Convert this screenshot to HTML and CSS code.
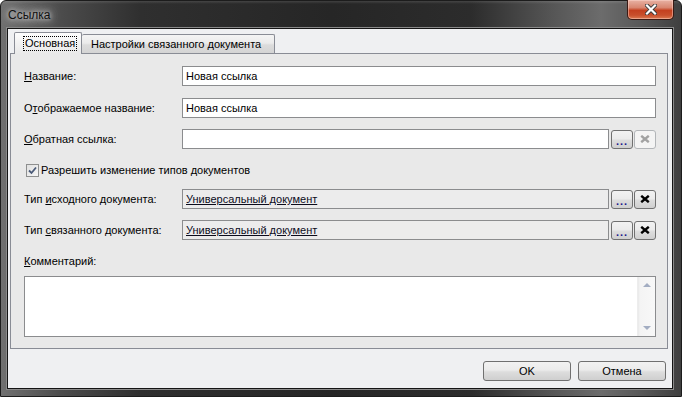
FILE: index.html
```html
<!DOCTYPE html>
<html lang="ru">
<head>
    <meta charset="UTF-8">
    <title>Ссылка</title>
    <link rel="stylesheet" href="styles.css">
</head>
<body>
    <div class="window">
        <div class="titlebar">
            <span class="title">Ссылка</span>
            <div class="close-btn">
                <svg width="12" height="11" viewBox="0 0 12 11">
                    <path d="M2 1.5 L10 9.5 M10 1.5 L2 9.5" stroke="#3a3a3a" stroke-width="4" stroke-linecap="square"/>
                    <path d="M2 1.5 L10 9.5 M10 1.5 L2 9.5" stroke="#ffffff" stroke-width="2.2" stroke-linecap="square"/>
                </svg>
            </div>
        </div>
        <div class="client">
            <div class="tabs">
                <div class="tab active"><span class="focus">Основная</span></div>
                <div class="tab">Настройки связанного документа</div>
            </div>
            <div class="panel">
                <div class="row">
                    <div class="label"><u>Н</u>азвание:</div>
                    <div class="field">Новая ссылка</div>
                </div>
                <div class="row gap12">
                    <div class="label">О<u>т</u>ображаемое название:</div>
                    <div class="field">Новая ссылка</div>
                </div>
                <div class="row gap11">
                    <div class="label"><u>О</u>братная ссылка:</div>
                    <div class="field"></div>
                    <div class="btn-small dots">...</div>
                    <div class="btn-small disabled">
                        <svg width="10" height="8" viewBox="0 0 10 8"><path d="M1.2 0.8 L8.8 7.2 M8.8 0.8 L1.2 7.2" stroke="#a2a2a2" stroke-width="2.4"/></svg>
                    </div>
                </div>
                <div class="row gap11 check-row">
                    <div class="checkbox">
                        <svg width="9" height="9" viewBox="0 0 9 9"><path d="M1 4.5 L3.5 7 L8 1.5" fill="none" stroke="#4a5a78" stroke-width="1.8"/></svg>
                    </div>
                    <span>Разрешить изменение типов документов</span>
                </div>
                <div class="row gap9">
                    <div class="label">Тип <u>и</u>сходного документа:</div>
                    <div class="field readonly"><span class="link">Универсальный документ</span></div>
                    <div class="btn-small dots">...</div>
                    <div class="btn-small">
                        <svg width="10" height="8" viewBox="0 0 10 8"><path d="M1.2 0.8 L8.8 7.2 M8.8 0.8 L1.2 7.2" stroke="#000" stroke-width="2.4"/></svg>
                    </div>
                </div>
                <div class="row gap11">
                    <div class="label">Тип <u>с</u>вязанного документа:</div>
                    <div class="field readonly"><span class="link">Универсальный документ</span></div>
                    <div class="btn-small dots">...</div>
                    <div class="btn-small">
                        <svg width="10" height="8" viewBox="0 0 10 8"><path d="M1.2 0.8 L8.8 7.2 M8.8 0.8 L1.2 7.2" stroke="#000" stroke-width="2.4"/></svg>
                    </div>
                </div>
                <div class="row gap11">
                    <div class="label"><u>К</u>омментарий:</div>
                </div>
                <div class="memo">
                    <div class="memo-text"></div>
                    <div class="scrollbar">
                        <div class="arrow up"></div>
                        <div class="arrow down"></div>
                    </div>
                </div>
            </div>
            <div class="footer">
                <div class="btn">OK</div>
                <div class="btn">Отмена</div>
            </div>
        </div>
    </div>
</body>
</html>
```

FILE: styles.css
```css
body {
    margin: 0;
    width: 682px;
    height: 397px;
    overflow: hidden;
    font-family: 'Liberation Sans', Arial, sans-serif;
    font-size: 11px;
    color: #000;
    background: #fff;
}
.window {
    width: 682px;
    height: 397px;
    display: flex;
    flex-direction: column;
    box-sizing: border-box;
    border-radius: 6px 6px 0 0;
    border: 1px solid #1c1c1c;
    background:
        linear-gradient(180deg, rgba(255,255,255,0.12) 0, rgba(0,0,0,0) 3px),
        linear-gradient(90deg, #707070 0, #4c4c4c 60px, #2f2f2f 140px, #262626 330px, #2c2c2c 470px, #555 550px, #6c6c6c 600px, #585858 640px, #3e3e3e 682px);
}
.titlebar {
    height: 28px;
    display: flex;
    justify-content: space-between;
    align-items: flex-start;
    padding: 0 7px 0 7px;
}
.title {
    margin-top: 7px;
    font-size: 12px;
    color: #111;
    text-shadow: 0 0 4px #d8d8d8, 0 0 8px #c8c8c8, 0 0 12px #bbb;
}
.close-btn {
    width: 45px;
    height: 19px;
    margin-top: -1px;
    display: flex;
    align-items: center;
    justify-content: center;
    border: 1px solid #3a1a14;
    border-top: none;
    border-radius: 0 0 5px 5px;
    background: linear-gradient(180deg, #e8b2a4 0, #d88670 40%, #c4401f 55%, #c84f2c 80%, #dc7a50 100%);
    box-shadow: inset 0 0 0 1px rgba(255,220,210,0.45);
}
.client {
    flex: 1;
    margin: 0 9px 8px 7px;
    display: flex;
    flex-direction: column;
    background: #eff0f2;
    box-shadow: 0 0 0 1px #141414, 0 0 0 2px #8a8a8a;
}
.tabs {
    display: flex;
    align-items: flex-end;
    padding: 3px 0 0 6px;
    position: relative;
    z-index: 1;
}
.tab {
    height: 18px;
    padding: 0 9px;
    display: flex;
    align-items: center;
    border: 1px solid #898c95;
    border-bottom: none;
    border-left: none;
    border-radius: 2px 2px 0 0;
    background: linear-gradient(180deg, #f4f4f4 0, #ebebeb 45%, #dcdcdc 55%, #d4d4d4 100%);
    color: #000;
}
.tab.active {
    height: 21px;
    width: 48px;
    padding: 0 9px;
    margin-bottom: -1px;
    border-left: 1px solid #898c95;
    background: linear-gradient(180deg, #fdfdfd 0, #f2f2f2 50%, #e9e9e9 100%);
}
.tab.active + .tab {
    width: 174px;
}
.focus {
    outline: 1px dotted #000;
    outline-offset: 0;
    padding: 0 1px;
    line-height: 13px;
}
.panel {
    margin: 0 4px 0 2px;
    padding: 12px 11px 11px 13px;
    border: 1px solid #898c95;
    background: #e9e9e9;
    display: flex;
    flex-direction: column;
}
.row {
    height: 20px;
    display: flex;
    align-items: center;
}
.gap9 { margin-top: 9px; }
.gap11 { margin-top: 11px; }
.gap12 { margin-top: 12px; }
.label {
    width: 158px;
    flex-shrink: 0;
    white-space: nowrap;
}
.field {
    flex: 1;
    height: 20px;
    box-sizing: border-box;
    border: 1px solid #8b8c8e;
    background: #fff;
    padding-left: 3px;
    display: flex;
    align-items: center;
    white-space: nowrap;
}
.field.readonly {
    background: #ececec;
}
.link {
    color: #0c0c1c;
    text-decoration: underline;
}
.btn-small {
    width: 22px;
    height: 19px;
    box-sizing: border-box;
    margin-left: 1px;
    border: 1px solid #707070;
    border-radius: 3px;
    background: linear-gradient(180deg, #f2f2f2 0, #ebebeb 45%, #dddddd 55%, #cfcfcf 100%);
    display: flex;
    align-items: center;
    justify-content: center;
}
.btn-small.dots {
    margin-left: 2px;
    align-items: flex-end;
    font-weight: bold;
    color: #1b1b8c;
    line-height: 13px;
    letter-spacing: 1px;
}
.btn-small.disabled {
    border-color: #b2b5b8;
    background: #f4f4f4;
}
.check-row {
    padding-left: 2px;
}
.checkbox {
    width: 13px;
    height: 13px;
    box-sizing: border-box;
    border: 1px solid #8e8f8f;
    background: linear-gradient(135deg, #e0e0e0 0, #f6f6f6 100%);
    display: flex;
    align-items: center;
    justify-content: center;
    margin-right: 2px;
}
.memo {
    margin-top: 5px;
    height: 61px;
    box-sizing: border-box;
    border: 1px solid #8b8c8e;
    background: #fff;
    display: flex;
}
.memo-text {
    flex: 1;
}
.scrollbar {
    width: 17px;
    display: flex;
    flex-direction: column;
    justify-content: space-between;
    align-items: center;
    padding: 6px 0;
    background: linear-gradient(90deg, #e8e8e8 0, #f4f4f4 2px, #f8f8f8 100%);
    border-left: 1px solid #ededed;
}
.arrow {
    width: 0;
    height: 0;
    border-left: 4px solid transparent;
    border-right: 4px solid transparent;
}
.arrow.up {
    border-bottom: 4px solid #a3adc2;
}
.arrow.down {
    border-top: 4px solid #a3adc2;
}
.footer {
    display: flex;
    justify-content: flex-end;
    gap: 7px;
    padding: 12px 6px 0 0;
}
.btn {
    width: 88px;
    height: 20px;
    box-sizing: border-box;
    border: 1px solid #707070;
    border-radius: 3px;
    background: linear-gradient(180deg, #f2f2f2 0, #ebebeb 45%, #dddddd 55%, #cfcfcf 100%);
    display: flex;
    align-items: center;
    justify-content: center;
}
```
